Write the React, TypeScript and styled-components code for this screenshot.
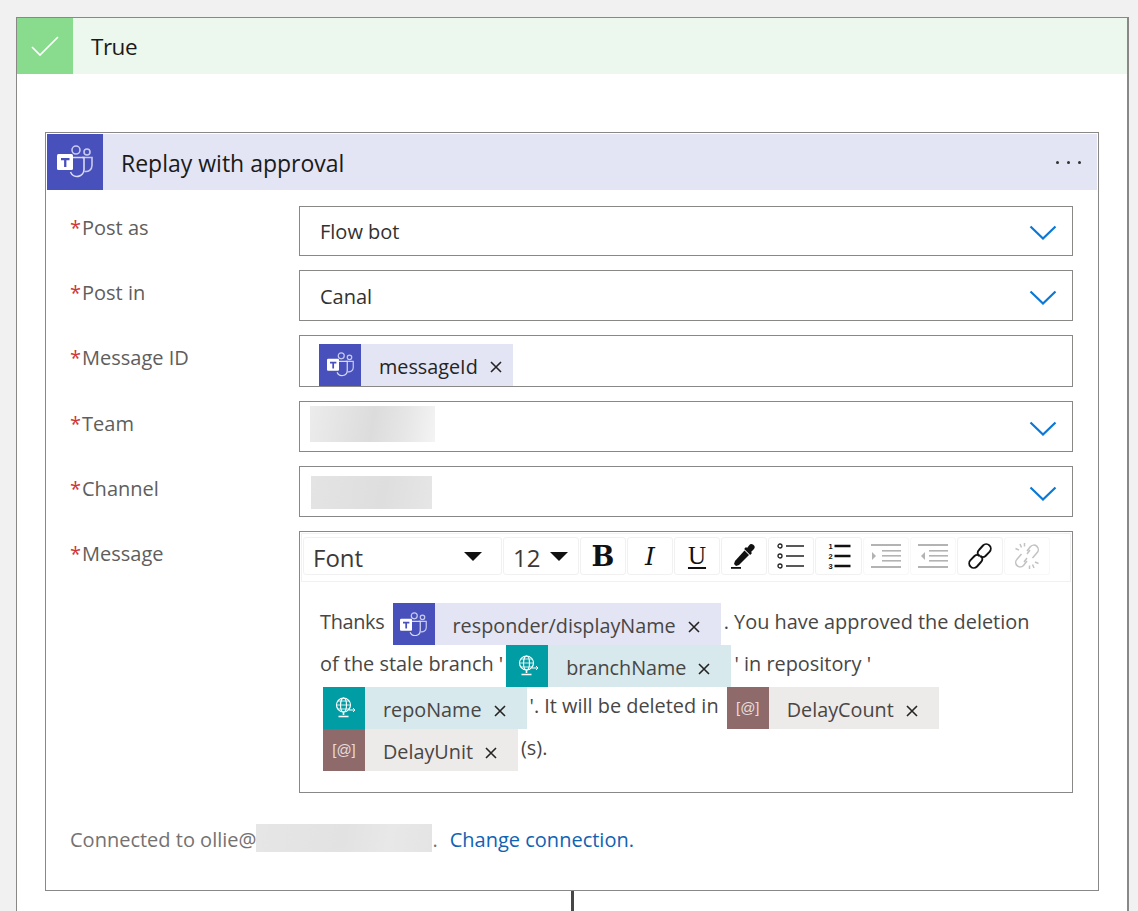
import type { ReactNode } from "react";
import styled, { createGlobalStyle } from "styled-components";

const FONT = `"Open Sans", "Noto Sans", sans-serif`;

const GlobalStyle = createGlobalStyle`
  html, body {
    margin: 0;
    height: 911px;
    overflow: hidden;
    background: #f1f1f1;
    font-family: ${FONT};
  }
`;

function TeamsIcon({ size }: { size: number }) {
  return (
    <svg width={size} height={size * 0.92} viewBox="0 0 36 33">
      <circle cx="19" cy="5" r="4" fill="none" stroke="#c9cbee" strokeWidth="1.6" />
      <circle cx="30" cy="7" r="3" fill="none" stroke="#c9cbee" strokeWidth="1.6" />
      <path d="M25 12.500h10v8a6 6 0 0 1-7.500 5.800" fill="none" stroke="#c9cbee" strokeWidth="1.6" />
      <path d="M14 12.500h13v12a7 7 0 0 1-13.500 2.500" fill="none" stroke="#d9dbf3" strokeWidth="1.6" />
      <rect x="0" y="9" width="16" height="16" rx="1.500" fill="#fff" />
      <path d="M4 13h8.500v2.200H9.400V22H7.100v-6.800H4z" fill="#4850bb" />
    </svg>
  );
}

function GlobeIcon() {
  return (
    <svg width="26" height="26" viewBox="0 0 26 26" fill="none" stroke="#fff" strokeWidth="1.2">
      <circle cx="12.500" cy="10" r="7" />
      <ellipse cx="12.500" cy="10" rx="3" ry="7" />
      <path d="M5.500 10h14M6.500 6h12M6.500 14h12" strokeWidth="0.8" />
      <path d="M12.500 17v3M7.500 21.500h10" strokeWidth="1.6" />
      <path d="M18 15h6M22 13l2 2-2 2" strokeWidth="1" />
    </svg>
  );
}

const ChevronSvg = styled.svg<{ $top: number }>`
  flex: none;
  margin-top: ${(p) => p.$top}px;
`;

function Chevron({ top }: { top: number }) {
  return (
    <ChevronSvg $top={top} width="28" height="15" viewBox="0 0 28 15" fill="none" stroke="#0a78d4" strokeWidth="2.2">
      <path d="M1.500 1.500 14 13.500 26.500 1.500" />
    </ChevronSvg>
  );
}

function CloseMark() {
  return (
    <svg width="12" height="12" viewBox="0 0 12 12" stroke="#252423" strokeWidth="1.6">
      <path d="M1 1l10 10M11 1L1 11" />
    </svg>
  );
}

function Dropper() {
  return (
    <svg width="30" height="30" viewBox="0 0 30 30" fill="#111">
      <path d="M20 4.500a3 3 0 0 1 5 3.600l-3 3 1 1-1.800 1.800-6-6 1.800-1.800 1 1z" />
      <path d="M15.500 9.500l4.500 4.500-10 10-3 1-2-2 1-3z" />
      <rect x="2" y="26" width="10" height="1.800" />
    </svg>
  );
}

function BulletList() {
  return (
    <svg width="30" height="26" viewBox="0 0 30 26" fill="none" stroke="#222">
      <circle cx="4" cy="3" r="2" strokeWidth="1.300" />
      <circle cx="4" cy="13" r="2" strokeWidth="1.300" />
      <circle cx="4" cy="23" r="2" strokeWidth="1.300" />
      <path d="M10 3h18M10 13h18M10 23h18" strokeWidth="1.500" />
    </svg>
  );
}

function NumberList() {
  return (
    <svg width="26" height="28" viewBox="0 0 26 28">
      <g fontFamily="Liberation Sans, sans-serif" fontSize="7.500" fontWeight="700" fill="#111">
        <text x="2.500" y="7">1</text>
        <text x="2.500" y="17">2</text>
        <text x="2.500" y="27">3</text>
      </g>
      <path d="M8.500 4h16M8.500 14h16M8.500 24h16" stroke="#111" strokeWidth="2.400" />
    </svg>
  );
}

function IndentMark({ flip }: { flip?: boolean }) {
  return (
    <svg width="30" height="26" viewBox="0 0 30 26" fill="#b3b3b3">
      <rect x="0" y="1" width="30" height="2" />
      <rect x="0" y="23" width="30" height="2" />
      <rect x="11" y="7" width="19" height="1.600" />
      <rect x="11" y="12" width="19" height="1.600" />
      <rect x="11" y="17" width="19" height="1.600" />
      {flip ? <path d="M7 9v8l-4-4z" /> : <path d="M1 9v8l4-4z" />}
    </svg>
  );
}

function LinkMark() {
  return (
    <svg width="30" height="30" viewBox="0 0 30 30" fill="none" stroke="#111" strokeWidth="1.900">
      <path d="M14 15a4 4 0 0 1 0-6l4-4.500a4.500 4.500 0 0 1 6.500 6.300l-4 4.200a4 4 0 0 1-5.500 0" />
      <path d="M16 15a4 4 0 0 1 0 6l-4 4.500a4.500 4.500 0 0 1-6.500-6.300l4-4.200a4 4 0 0 1 5.500 0" />
    </svg>
  );
}

function UnlinkMark() {
  return (
    <svg width="30" height="30" viewBox="0 0 30 30" fill="none" stroke="#c2c2c2" strokeWidth="1.500">
      <path d="M15 10l3.500-4.500a4.500 4.500 0 0 1 6.500 6.300L20.500 17M18 9l-3 4" />
      <path d="M15 20l-3.500 4.500a4.500 4.500 0 0 1-6.500-6.300L9.500 13M12 21l3-4" />
      <path d="M8 3l1.500 3.500M3.500 7.500L7 9M12.500 2v3.500M22 27l-1.500-3.500M26.500 22.500L23 21M17.500 28v-3.500" />
    </svg>
  );
}

const Outer = styled.div`
  margin: 17px 0 0 16px;
  width: 1113px;
  height: 920px;
  box-sizing: border-box;
  border: 1px solid #8a8886;
  border-right-width: 2px;
  border-bottom: none;
  background: #fff;
`;

const BranchHeader = styled.div`
  display: flex;
  align-items: center;
  height: 56px;
  background: #ecf7ee;
  color: #1b1a19;
`;

const BranchTitle = styled.div`
  padding-top: 1px;
  font-size: 22.5px;
  letter-spacing: -0.5px;
`;

const BranchIcon = styled.div`
  width: 56px;
  height: 56px;
  display: flex;
  align-items: center;
  justify-content: center;
  background: #89dc8d;
  margin-right: 18px;
`;

const Card = styled.div`
  margin: 58px 0 0 28px;
  width: 1054px;
  height: 759px;
  box-sizing: border-box;
  border: 1px solid #8a8886;
  padding: 1px;
  background: #fff;
`;

const Connector = styled.div`
  margin: 0 0 0 554px;
  width: 3px;
  height: 30px;
  background: #484644;
`;

const CardHeader = styled.div`
  display: flex;
  align-items: center;
  height: 56px;
  padding-right: 16px;
  background: #e3e5f4;
  font-size: 23px;
  color: #1b1a19;
`;

const CardTitle = styled.div`
  flex: 1;
  margin-left: 18px;
  padding-top: 2px;
`;

const ConnectorIcon = styled.div<{ $size: number; $bg: string }>`
  flex: none;
  width: ${(p) => p.$size}px;
  height: ${(p) => p.$size}px;
  display: flex;
  align-items: center;
  justify-content: center;
  background: ${(p) => p.$bg};
`;

const Dots = styled.div`
  display: flex;
  gap: 8px;
`;

const Dot = styled.span`
  width: 3px;
  height: 3px;
  border-radius: 50%;
  background: #323130;
`;

const Form = styled.div`
  display: grid;
  grid-template-columns: 252px 774px;
  row-gap: 14px;
  padding: 16px 0 0 0;
`;

const Label = styled.div<{ $top: number }>`
  padding: ${(p) => p.$top}px 0 0 23px;
  font-size: 20px;
  line-height: 28px;
  color: #605e5c;
`;

const Star = styled.span`
  color: #d13438;
  margin-right: 1px;
`;

const Field = styled.div<{ $h: number }>`
  height: ${(p) => p.$h}px;
  box-sizing: border-box;
  border: 1px solid #8a8886;
  display: flex;
  align-items: center;
  padding: ${(p) => (p.$h === 51 ? 2 : 0)}px 15px 0 20px;
  font-size: 20px;
  color: #323130;
`;

const FieldValue = styled.div`
  flex: 1;
`;

const BlurBlock = styled.div<{ $w: number; $h: number; $left: number; $top: number; $tones: string }>`
  width: ${(p) => p.$w}px;
  height: ${(p) => p.$h}px;
  margin: ${(p) => p.$top}px 0 0 ${(p) => p.$left}px;
  background: linear-gradient(100deg, ${(p) => p.$tones});
`;

const Token = styled.span<{ $bg: string }>`
  display: inline-flex;
  vertical-align: top;
  height: 42px;
  margin: 0 3px;
  background: ${(p) => p.$bg};
  font-size: 19.8px;
  line-height: 42px;
  word-spacing: 0;
  color: #484644;
`;

const FieldToken = styled(Token)`
  margin: 7px 0 0 -1px;
  color: #252423;
`;

const TokenText = styled.span`
  padding: 2px 0 0 18px;
  line-height: 42px;
  height: 40px;
`;

const TokenClose = styled.span<{ $compact?: boolean }>`
  display: flex;
  align-items: center;
  padding: 5px ${(p) => (p.$compact ? 11 : 21)}px 0 12px;
`;

const AtSign = styled.span`
  font-family: "Liberation Sans", sans-serif;
  font-size: 15px;
  color: #e6dcdc;
`;

const Editor = styled.div`
  height: 262px;
  box-sizing: border-box;
  border: 1px solid #8a8886;
  padding: 1px;
`;

const Toolbar = styled.div`
  display: flex;
  gap: 1px;
  height: 49px;
  box-sizing: border-box;
  border: 1px solid #f1f1f1;
  padding: 3px 1px;
  width: 770px;
`;

const ToolButton = styled.div<{ $w: number; $muted?: boolean }>`
  width: ${(p) => p.$w}px;
  height: 38px;
  box-sizing: border-box;
  display: flex;
  align-items: center;
  justify-content: center;
  border: 1px solid ${(p) => (p.$muted ? "#f8f8f8" : "#f1f1f1")};
  border-radius: 3px;
  font-size: 24px;
  color: #3b3a39;
`;

const SelectButton = styled(ToolButton)`
  justify-content: space-between;
  padding: 2px 19px 0 9px;
`;

const SizeButton = styled(ToolButton)`
  justify-content: flex-start;
  gap: 10px;
  padding: 2px 0 0 9px;
`;

const Caret = styled.span`
  margin-top: -2px;
  border-left: 9px solid transparent;
  border-right: 9px solid transparent;
  border-top: 9px solid #111;
`;

const Bold = styled.span`
  font-family: "DejaVu Serif", serif;
  font-weight: 700;
  font-size: 27px;
  color: #111;
`;

const Italic = styled.span`
  font-family: "DejaVu Serif", serif;
  font-style: italic;
  font-size: 25px;
  color: #111;
`;

const Underline = styled.span`
  font-family: "Liberation Serif", serif;
  font-size: 25px;
  line-height: 30px;
  text-decoration: underline;
  text-decoration-thickness: 2px;
  text-underline-offset: 3px;
  color: #111;
`;

const EditorBody = styled.div`
  padding: 21px 31px 0 19px;
  font-size: 19.9px;
  line-height: 38px;
  color: #484644;
`;

const Lead = styled.span`
  letter-spacing: -0.33px;
`;

const Connection = styled.div`
  display: flex;
  align-items: center;
  height: 28px;
  margin: 32px 0 0 23px;
  font-size: 20px;
  color: #747271;
`;

const ChangeLink = styled.a`
  margin-left: 12px;
  color: #0f62b4;
`;

const teams = (
  <ConnectorIcon $size={42} $bg="#4850bb">
    <TeamsIcon size={27} />
  </ConnectorIcon>
);
const globe = (
  <ConnectorIcon $size={42} $bg="#009da5">
    <GlobeIcon />
  </ConnectorIcon>
);
const variable = (
  <ConnectorIcon $size={42} $bg="#8e6a6a">
    <AtSign>[@]</AtSign>
  </ConnectorIcon>
);

function Chip({ icon, bg, text }: { icon: ReactNode; bg: string; text: string }) {
  return (
    <Token $bg={bg}>
      {icon}
      <TokenText>{text}</TokenText>
      <TokenClose>
        <CloseMark />
      </TokenClose>
    </Token>
  );
}

export default function App() {
  return (
    <>
      <GlobalStyle />
      <Outer>
        <BranchHeader>
          <BranchIcon>
            <svg width="28" height="20" viewBox="0 0 28 20" fill="none" stroke="#fff" strokeWidth="1.700">
              <path d="M1 11l8 8L27 1" />
            </svg>
          </BranchIcon>
          <BranchTitle>True</BranchTitle>
        </BranchHeader>
        <Card>
          <CardHeader>
            <ConnectorIcon $size={56} $bg="#4850bb">
              <TeamsIcon size={36} />
            </ConnectorIcon>
            <CardTitle>Replay with approval</CardTitle>
            <Dots>
              <Dot />
              <Dot />
              <Dot />
            </Dots>
          </CardHeader>
          <Form>
            <Label $top={8}>
              <Star>*</Star>Post as
            </Label>
            <Field $h={50}>
              <FieldValue>Flow bot</FieldValue>
              <Chevron top={3} />
            </Field>
            <Label $top={9}>
              <Star>*</Star>Post in
            </Label>
            <Field $h={51}>
              <FieldValue>Canal</FieldValue>
              <Chevron top={1} />
            </Field>
            <Label $top={9}>
              <Star>*</Star>Message ID
            </Label>
            <Field $h={52}>
              <FieldValue>
                <FieldToken $bg="#e3e5f4">
                  {teams}
                  <TokenText>messageId</TokenText>
                  <TokenClose $compact>
                    <CloseMark />
                  </TokenClose>
                </FieldToken>
              </FieldValue>
            </Field>
            <Label $top={9}>
              <Star>*</Star>Team
            </Label>
            <Field $h={51}>
              <FieldValue>
                <BlurBlock $w={125} $h={36} $left={-10} $top={-8} $tones="#ececec 0%, #dcdcdc 50%, #e6e6e6 75%, #f4f4f4 100%" />
              </FieldValue>
              <Chevron top={1} />
            </Field>
            <Label $top={9}>
              <Star>*</Star>Channel
            </Label>
            <Field $h={51}>
              <FieldValue>
                <BlurBlock $w={121} $h={33} $left={-9} $top={0} $tones="#e4e4e4 0%, #dedede 60%, #e6e6e6 100%" />
              </FieldValue>
              <Chevron top={1} />
            </Field>
            <Label $top={9}>
              <Star>*</Star>Message
            </Label>
            <Editor>
              <Toolbar>
                <SelectButton $w={199}>
                  Font
                  <Caret />
                </SelectButton>
                <SizeButton $w={76}>
                  12
                  <Caret />
                </SizeButton>
                <ToolButton $w={46}>
                  <Bold>B</Bold>
                </ToolButton>
                <ToolButton $w={46}>
                  <Italic>I</Italic>
                </ToolButton>
                <ToolButton $w={46}>
                  <Underline>U</Underline>
                </ToolButton>
                <ToolButton $w={46}>
                  <Dropper />
                </ToolButton>
                <ToolButton $w={46}>
                  <BulletList />
                </ToolButton>
                <ToolButton $w={47}>
                  <NumberList />
                </ToolButton>
                <ToolButton $w={46} $muted>
                  <IndentMark />
                </ToolButton>
                <ToolButton $w={46} $muted>
                  <IndentMark flip />
                </ToolButton>
                <ToolButton $w={46}>
                  <LinkMark />
                </ToolButton>
                <ToolButton $w={46} $muted>
                  <UnlinkMark />
                </ToolButton>
              </Toolbar>
              <EditorBody>
                <Lead>Thanks</Lead> <Chip icon={teams} bg="#e3e5f4" text="responder/displayName" />. You have approved the
                deletion of the stale branch '<Chip icon={globe} bg="#d7e9ec" text="branchName" />' in repository '
                <Chip icon={globe} bg="#d7e9ec" text="repoName" />'. It will be deleted in{" "}
                <Chip icon={variable} bg="#edeaea" text="DelayCount" />
                <Chip icon={variable} bg="#edeaea" text="DelayUnit" />
                (s).
              </EditorBody>
            </Editor>
          </Form>
          <Connection>
            Connected to ollie@
            <BlurBlock $w={176} $h={28} $left={0} $top={-2} $tones="#e6e6e6 0%, #e2e2e2 50%, #e8e8e8 75%, #e4e4e4 100%" />.
            <ChangeLink>Change connection.</ChangeLink>
          </Connection>
        </Card>
        <Connector />
      </Outer>
    </>
  );
}
